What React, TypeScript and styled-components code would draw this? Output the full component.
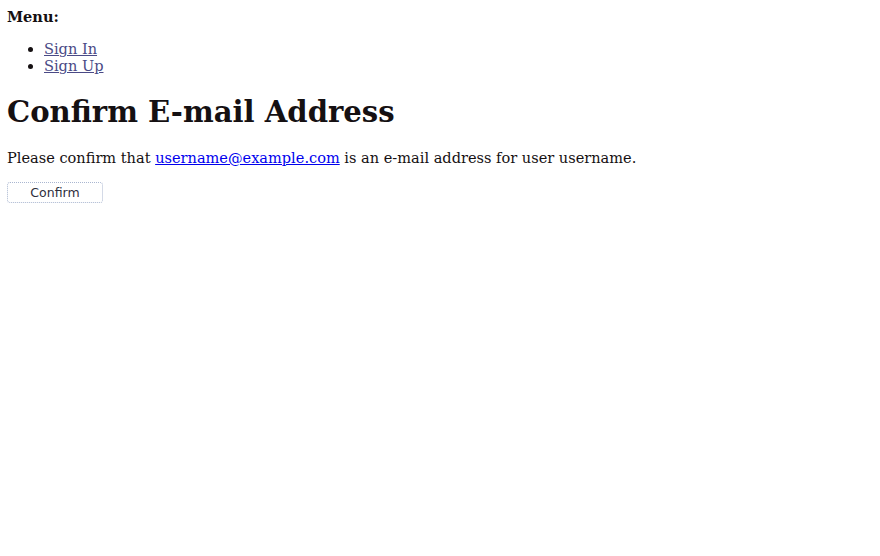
import React from "react";
import styled, { createGlobalStyle } from "styled-components";

const Global = createGlobalStyle`
  body {
    margin: 7px;
    font-family: "DejaVu Serif", serif;
    font-size: 14.55px;
    color: #151012;
    background: #fff;
  }
`;

const MenuLabel = styled.div`
  font-weight: bold;
  line-height: 19px;
`;

const MenuList = styled.ul`
  margin: 14px 0 0;
  padding-left: 37px;
`;

const MenuItem = styled.li`
  line-height: 17px;
`;

const MenuLink = styled.a`
  color: #4a4a86;
`;

const Title = styled.h1`
  font-size: 29.1px;
  margin: 21px 0 19px;
  line-height: 34px;
`;

const Text = styled.p`
  margin: 0 0 15px;
  line-height: 19px;
`;

const EmailLink = styled.a`
  color: #0000ee;
`;

const ConfirmButton = styled.button`
  display: block;
  width: 96px;
  height: 21px;
  padding: 0;
  font-family: "DejaVu Sans", sans-serif;
  font-size: 12.5px;
  color: #2e2e3c;
  background: #fff;
  border: 1px dotted #a9b6d0;
  border-radius: 3px;
`;

export default function App() {
  return (
    <>
      <Global />
      <MenuLabel>Menu:</MenuLabel>
      <MenuList>
        <MenuItem>
          <MenuLink href="#">Sign In</MenuLink>
        </MenuItem>
        <MenuItem>
          <MenuLink href="#">Sign Up</MenuLink>
        </MenuItem>
      </MenuList>
      <Title>Confirm E-mail Address</Title>
      <Text>
        Please confirm that <EmailLink href="#">username@example.com</EmailLink> is an e-mail address for user username.
      </Text>
      <ConfirmButton>Confirm</ConfirmButton>
    </>
  );
}
